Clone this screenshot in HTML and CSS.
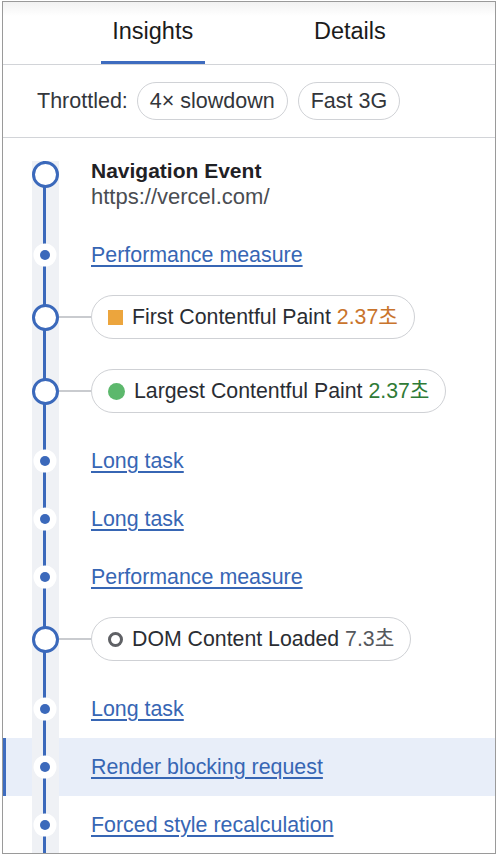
FILE: index.html
```html
<!DOCTYPE html>
<html lang="ko">
<head>
<meta charset="utf-8">
<link rel="stylesheet" href="styles.css">
</head>
<body>
<div class="panel">
  <div class="tabs">
    <div class="tab active">Insights</div>
    <div class="tab">Details</div>
  </div>
  <div class="throttle">
    <span class="throttle-label">Throttled:</span>
    <span class="chip">4× slowdown</span>
    <span class="chip">Fast 3G</span>
  </div>
  <div class="timeline">
    <div class="row row-nav">
      <div class="track track-first"><span class="node"></span></div>
      <div class="content">
        <div class="nav-title">Navigation Event</div>
        <div class="nav-url">https://vercel.com/</div>
      </div>
    </div>
    <div class="row row-link">
      <div class="track"><span class="dot"></span></div>
      <div class="content"><a class="link" href="#">Performance measure</a></div>
    </div>
    <div class="row row-pill">
      <div class="track"><span class="node"></span><span class="connector"></span></div>
      <div class="content">
        <span class="pill"><span class="ic ic-square"></span><span class="pill-text">First Contentful Paint <span class="val val-orange">2.37초</span></span></span>
      </div>
    </div>
    <div class="row row-pill">
      <div class="track"><span class="node"></span><span class="connector"></span></div>
      <div class="content">
        <span class="pill"><span class="ic ic-circle"></span><span class="pill-text">Largest Contentful Paint <span class="val val-green">2.37초</span></span></span>
      </div>
    </div>
    <div class="row row-link">
      <div class="track"><span class="dot"></span></div>
      <div class="content"><a class="link" href="#">Long task</a></div>
    </div>
    <div class="row row-link">
      <div class="track"><span class="dot"></span></div>
      <div class="content"><a class="link" href="#">Long task</a></div>
    </div>
    <div class="row row-link">
      <div class="track"><span class="dot"></span></div>
      <div class="content"><a class="link" href="#">Performance measure</a></div>
    </div>
    <div class="row row-pill">
      <div class="track"><span class="node"></span><span class="connector"></span></div>
      <div class="content">
        <span class="pill"><span class="ic ic-ring"></span><span class="pill-text">DOM Content Loaded <span class="val val-gray">7.3초</span></span></span>
      </div>
    </div>
    <div class="row row-link">
      <div class="track"><span class="dot"></span></div>
      <div class="content"><a class="link" href="#">Long task</a></div>
    </div>
    <div class="row row-link row-selected">
      <div class="track"><span class="dot"></span></div>
      <div class="content"><a class="link" href="#">Render blocking request</a></div>
    </div>
    <div class="row row-link">
      <div class="track"><span class="dot"></span></div>
      <div class="content"><a class="link" href="#">Forced style recalculation</a></div>
    </div>
  </div>
</div>
</body>
</html>
```
FILE: styles.css
```css
* { box-sizing: border-box; }
html, body {
  margin: 0;
  padding: 0;
  background: #fff;
}
body {
  font-family: "Liberation Sans", Arial, "Noto Sans CJK KR", sans-serif;
  color: #2a2d33;
}
.panel {
  width: 494px;
  height: 853px;
  margin: 1px 0 0 2px;
  border: 1px solid #9a9a9a;
  overflow: hidden;
  background: #fff;
}
.tabs {
  display: flex;
  justify-content: space-evenly;
  height: 63px;
  border-bottom: 1px solid #d2d4d8;
  background: linear-gradient(to bottom, #f2f2f2 0, #ffffff 14px);
}
.tab {
  height: 62px;
  padding: 0 11.5px;
  font-size: 23.5px;
  line-height: 59px;
  color: #1b1b1b;
  border-bottom: 3px solid transparent;
}
.tab.active {
  border-bottom-color: #3e6cbf;
}
.throttle {
  display: flex;
  align-items: center;
  height: 73px;
  padding-left: 34px;
  border-bottom: 1px solid #d2d4d8;
  font-size: 21.5px;
  color: #33363b;
}
.throttle-label {
  margin-right: 9px;
}
.chip {
  height: 38px;
  line-height: 36px;
  padding: 0 12px;
  border: 1.5px solid #d0d2d6;
  border-radius: 19px;
  margin-right: 10px;
}
.timeline {
  display: flex;
  flex-direction: column;
}
.row {
  display: grid;
  grid-template-columns: 88px 1fr;
}
.track {
  display: flex;
  align-items: center;
  background: linear-gradient(to right,
    transparent 29px, #eff1f5 29px,
    #eff1f5 40.5px, #3b69bb 40.5px,
    #3b69bb 43.5px, #eff1f5 43.5px,
    #eff1f5 56px, transparent 56px);
}
.track-first {
  align-items: flex-start;
  padding-top: 23px;
  background-position: 0 23px;
  background-repeat: no-repeat;
}
.node {
  flex: none;
  width: 27px;
  height: 27px;
  margin-left: 28.5px;
  border: 3px solid #3b69bb;
  border-radius: 50%;
  background: #fff;
}
.dot {
  flex: none;
  width: 10px;
  height: 10px;
  margin-left: 37px;
  border-radius: 50%;
  background: #3b69bb;
  box-shadow: 0 0 0 6.5px #fff;
}
.connector {
  flex: 1;
  height: 1.5px;
  background: #c9cbcf;
}
.content {
  display: flex;
  align-items: center;
}
.row-nav {
  height: 88px;
}
.row-nav .content {
  flex-direction: column;
  align-items: flex-start;
  padding-top: 20px;
}
.nav-title {
  font-size: 21px;
  font-weight: bold;
  line-height: 26px;
  color: #1f2125;
}
.nav-url {
  font-size: 22px;
  line-height: 26px;
  color: #4a4d52;
}
.row-link {
  height: 58px;
}
.row-pill {
  height: 74px;
}
.row-pill .track {
  padding: 19.5px 0 27.5px;
}
.row-pill .content {
  padding: 11px 0 19px;
}
.row-selected {
  background: #e8eef9;
  box-shadow: inset 3px 0 0 #3e6cbf;
}
.link {
  font-size: 21.4px;
  color: #3766b4;
  text-decoration: underline;
  text-decoration-thickness: 1.5px;
  text-underline-offset: 3px;
}
.pill {
  display: inline-flex;
  align-items: center;
  height: 44px;
  padding: 0 16px;
  border: 1.5px solid #cfd1d5;
  border-radius: 22px;
  font-size: 21.3px;
  color: #2a2d33;
}
.pill-text {
  line-height: 26px;
  white-space: nowrap;
}
.ic {
  flex: none;
  margin-right: 9px;
}
.ic-square {
  width: 15px;
  height: 15px;
  background: #eca53d;
}
.ic-circle {
  width: 17px;
  height: 17px;
  border-radius: 50%;
  background: #5cb86c;
}
.ic-ring {
  width: 15px;
  height: 15px;
  border-radius: 50%;
  border: 3px solid #5f6165;
}
.val-orange { color: #c9742c; }
.val-green { color: #2f7b36; }
.val-gray { color: #55585d; }
```
